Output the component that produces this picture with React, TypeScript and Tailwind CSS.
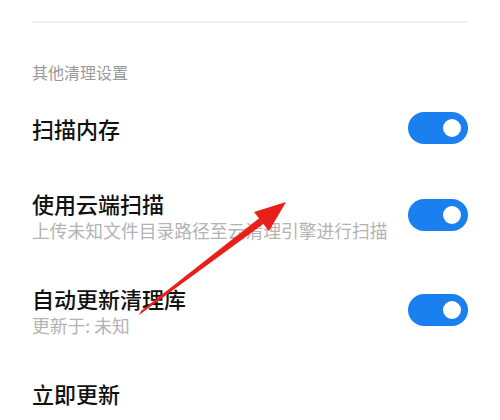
import * as React from "react";

const font = { fontFamily: '"Noto Sans CJK SC", "Noto Sans", sans-serif' };

function Toggle() {
  return (
    <div className="flex h-[32px] w-[60px] shrink-0 items-center justify-end rounded-full bg-[#1a80f0] pr-[7px]">
      <div className="h-[18px] w-[18px] rounded-full bg-white" />
    </div>
  );
}

function Row({ title, sub, className }: { title: string; sub?: string; className?: string }) {
  return (
    <div className={"flex items-center justify-between " + (className ?? "")}>
      <div className="flex flex-col">
        <span className="text-[22px] leading-[30px] font-medium text-[#111]">{title}</span>
        {sub && <span className="text-[17.8px] leading-[24px] text-[#b3b3b3]">{sub}</span>}
      </div>
      <Toggle />
    </div>
  );
}

export default function App() {
  return (
    <div className="relative h-[420px] w-[500px] overflow-hidden bg-white px-8" style={font}>
      <div className="mt-[21px] h-[2px] bg-[#f1f1f1]" />
      <div className="mt-[37px] text-[16px] leading-[24px] text-[#9a9a9a]">其他清理设置</div>
      <Row title="扫描内存" className="mt-[28px] h-[32px]" />
      <Row title="使用云端扫描" sub="上传未知文件目录路径至云清理引擎进行扫描" className="mt-[44px] h-[54px]" />
      <Row title="自动更新清理库" sub="更新于: 未知" className="mt-[41px] h-[54px]" />
      <div className="mt-[41px] text-[22px] leading-[30px] font-medium text-[#111]">立即更新</div>

      {/* red annotation arrow */}
      <svg className="pointer-events-none absolute left-0 top-0" width="500" height="420" viewBox="0 0 500 420">
        <polygon points="139,315 141,311 262,216 266,222" fill="#e8201b" />
        <polygon points="286,202 269,231 254,212" fill="#e8201b" />
      </svg>
    </div>
  );
}
